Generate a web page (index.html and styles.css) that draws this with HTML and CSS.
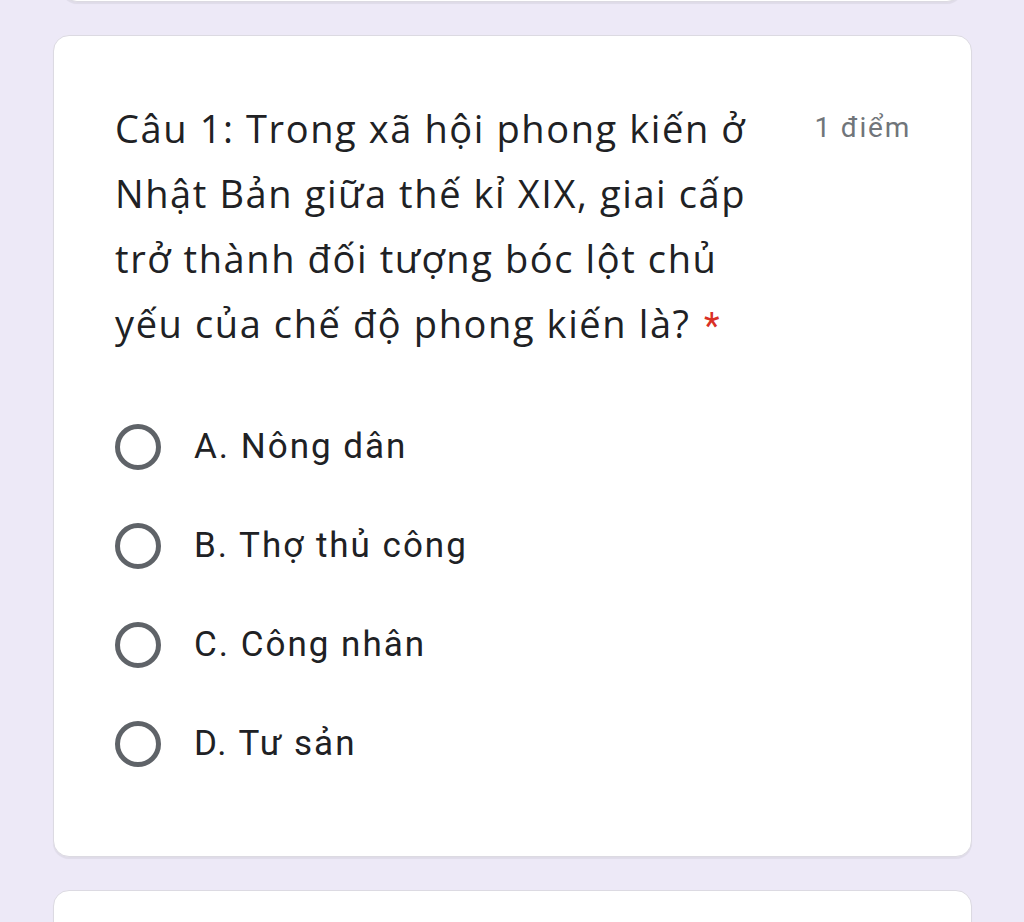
FILE: index.html
```html
<!DOCTYPE html>
<html lang="vi">
<head>
    <meta charset="UTF-8">
    <meta name="viewport" content="width=device-width, initial-scale=1.0">
    <title>Câu hỏi</title>
    <link rel="stylesheet" href="styles.css">
</head>
<body>
    <div class="form-list">
        <div class="card card-prev"></div>

        <div class="card question">
            <div class="question-head">
                <div class="question-title">Câu 1: Trong xã hội phong kiến ở Nhật Bản giữa thế kỉ XIX, giai cấp trở thành đối tượng bóc lột chủ yếu của chế độ phong kiến là? <span class="required">*</span></div>
                <div class="points">1 điểm</div>
            </div>

            <ul class="options">
                <li class="option"><span class="radio"></span><span class="option-label">A. Nông dân</span></li>
                <li class="option"><span class="radio"></span><span class="option-label">B. Thợ thủ công</span></li>
                <li class="option"><span class="radio"></span><span class="option-label">C. Công nhân</span></li>
                <li class="option"><span class="radio"></span><span class="option-label">D. Tư sản</span></li>
            </ul>
        </div>

        <div class="card card-next"></div>
    </div>
</body>
</html>
```

FILE: styles.css
```css
body {
    margin: 0;
    background-color: #ede9f7;
    font-family: Roboto, "Liberation Sans", sans-serif;
    color: #202124;
    height: 922px;
    overflow: hidden;
}
.form-list {
    display: flex;
    flex-direction: column;
    gap: 33px;
    margin-top: -40px;
    padding: 0 52px 0 53px;
}
.card {
    background-color: #fff;
    border: 1px solid #dcdae2;
    border-radius: 16px;
    box-shadow: 0 2px 1px rgba(0,0,0,0.06);
    box-sizing: border-box;
}
.card-prev {
    height: 42px;
    margin: 0 9px 0 8px;
}
.card-next {
    height: 80px;
}
.question {
    padding: 60px 60px 63px 61px;
}
.question-head {
    display: flex;
    justify-content: space-between;
    align-items: flex-start;
}
.question-title {
    width: 680px;
    font-family: "Open Sans", Lato, sans-serif;
    font-size: 38px;
    letter-spacing: 1.6px;
    line-height: 65px;
    color: #202124;
}
.required {
    font-family: Roboto, sans-serif;
    font-size: 36px;
    line-height: 1;
    letter-spacing: 0;
    margin-left: 2px;
    color: #d93025;
}
.points {
    font-size: 28px;
    letter-spacing: 1.8px;
    color: #70757a;
    margin-top: 15px;
}
.options {
    list-style: none;
    margin: 41px 0 0;
    padding: 0;
}
.option {
    display: flex;
    align-items: center;
    height: 99px;
}
.radio {
    width: 46px;
    height: 46px;
    border: 5px solid #5f6368;
    border-radius: 50%;
    box-sizing: border-box;
    flex-shrink: 0;
}
.option-label {
    margin-left: 33px;
    font-size: 35px;
    letter-spacing: 2px;
    color: #202124;
}
```
